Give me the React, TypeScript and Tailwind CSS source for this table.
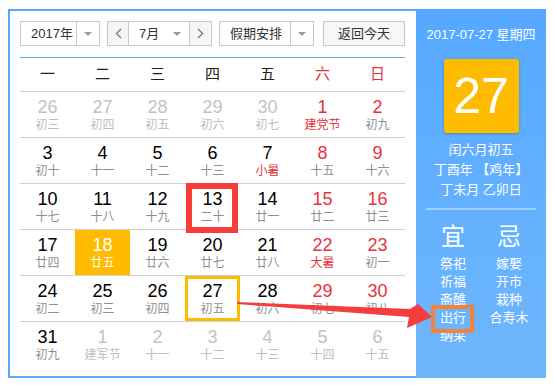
import React from "react";

type Cell = [number, string];

const weeks: Cell[][] = [
  [[26, "初三"], [27, "初四"], [28, "初五"], [29, "初六"], [30, "初七"], [1, "建党节"], [2, "初九"]],
  [[3, "初十"], [4, "十一"], [5, "十二"], [6, "十三"], [7, "小暑"], [8, "十五"], [9, "十六"]],
  [[10, "十七"], [11, "十八"], [12, "十九"], [13, "二十"], [14, "廿一"], [15, "廿二"], [16, "廿三"]],
  [[17, "廿四"], [18, "廿五"], [19, "廿六"], [20, "廿七"], [21, "廿八"], [22, "大暑"], [23, "初一"]],
  [[24, "初二"], [25, "初三"], [26, "初四"], [27, "初五"], [28, "初六"], [29, "初七"], [30, "初八"]],
  [[31, "初九"], [1, "建军节"], [2, "十一"], [3, "十二"], [4, "十三"], [5, "十四"], [6, "十五"]],
];

const redTerms = ["建党节", "小暑", "大暑"];

function Caret() {
  return <span className="block h-0 w-0 border-x-[4px] border-t-[4px] border-x-transparent border-t-[#9a9a9a]" />;
}

function DayCell({ cell, row, col }: { cell: Cell; row: number; col: number }) {
  const [n, lunar] = cell;
  const other = (row === 0 && n > 20) || (row === 5 && n < 10);
  const selected = row === 3 && col === 1;
  const today = row === 4 && col === 3;
  const weekend = col >= 5;

  let numColor = "text-black";
  let lunarColor = "text-[#8f8f8f]";
  if (other) {
    numColor = "text-[#c2c2c2]";
    lunarColor = "text-[#bdbdbd]";
  } else if (selected) {
    numColor = "text-white";
    lunarColor = "text-white";
  } else {
    if (weekend) numColor = "text-[#e8323a]";
    if (redTerms.includes(lunar)) lunarColor = "text-[#e8323a]";
  }

  return (
    <div
      className={
        "flex flex-col items-center " +
        (selected ? "bg-[#ffbb00] pt-[5px] " : "") +
        (today ? "border-[3px] border-[#ffbb00] pt-[2px]" : "") +
        (!selected && !today ? "pt-[5px]" : "")
      }
    >
      <span className={"text-[18px] leading-[20px] " + numColor}>{n}</span>
      <span className={"text-[12px] leading-[16px] " + lunarColor}>{lunar}</span>
    </div>
  );
}

export default function App() {
  const yi = ["祭祀", "祈福", "斋醮", "出行", "纳采"];
  const ji = ["嫁娶", "开市", "栽种", "合寿木"];

  return (
    <div className="relative h-[387px] w-[554px] bg-white pl-[8px] pt-[9px] font-['Liberation_Sans','Noto_Sans_CJK_SC',sans-serif]">
      <div className="flex h-[369px] w-[538px]">
        {/* Calendar */}
        <div className="w-[408px] border-2 border-r-0 border-[#57a9ff] bg-white pl-[10px] pr-[11px] pt-[10px]">
          <div className="flex h-[25px] text-[13px] text-[#333]">
            <div className="flex w-[80px] border border-[#c8c8c8]">
              <div className="flex w-[55px] items-center pl-[10px]">2017年</div>
              <div className="flex flex-1 items-center justify-center border-l border-[#c8c8c8]">
                <Caret />
              </div>
            </div>
            <div className="ml-[7px] flex w-[105px] border border-[#c8c8c8]">
              <div className="flex w-[21px] items-center justify-center border-r border-[#c8c8c8] bg-[#f5f5f5]">
                <svg width="7" height="11" viewBox="0 0 7 11">
                  <polyline points="6,1 1.5,5.5 6,10" fill="none" stroke="#777" strokeWidth="1.3" />
                </svg>
              </div>
              <div className="flex flex-1 items-center justify-between pl-[10px] pr-[8px]">
                <span>7月</span>
                <Caret />
              </div>
              <div className="flex w-[22px] items-center justify-center border-l border-[#c8c8c8] bg-[#f5f5f5]">
                <svg width="7" height="11" viewBox="0 0 7 11">
                  <polyline points="1,1 5.5,5.5 1,10" fill="none" stroke="#777" strokeWidth="1.3" />
                </svg>
              </div>
            </div>
            <div className="ml-[7px] flex w-[95px] border border-[#c8c8c8]">
              <div className="flex w-[70px] items-center pl-[10px]">假期安排</div>
              <div className="flex flex-1 items-center justify-center border-l border-[#c8c8c8]">
                <Caret />
              </div>
            </div>
            <button className="ml-[9px] w-[82px] border border-[#c8c8c8] bg-[#f7f7f7] text-[13px] text-[#333]">
              返回今天
            </button>
          </div>

          <div className="mt-[11px] h-px bg-[#57a9ff]" />

          <div className="grid h-[34px] grid-cols-7 items-center border-b border-[#cfcfcf] text-center text-[15px] text-[#222]">
            {["一", "二", "三", "四", "五"].map((d) => (
              <span key={d}>{d}</span>
            ))}
            <span className="text-[#e8323a]">六</span>
            <span className="text-[#e8323a]">日</span>
          </div>

          {weeks.map((week, r) => (
            <div
              key={r}
              className={"grid h-[46px] grid-cols-7 " + (r < weeks.length - 1 ? "border-b border-[#cfcfcf]" : "")}
            >
              {week.map((cell, c) => (
                <DayCell key={c} cell={cell} row={r} col={c} />
              ))}
            </div>
          ))}
        </div>

        {/* Day detail */}
        <div className="flex w-[130px] flex-col items-center bg-linear-to-b from-[#55a8ff] to-[#6fb7fd] pt-[16px] text-white">
          <div className="text-[13px] leading-[20px]">2017-07-27 星期四</div>
          <div className="mt-[14px] flex h-[74px] w-[75px] items-center justify-center rounded-[3px] bg-[#ffbb00] text-[50px] leading-none shadow-[0_1px_3px_rgba(0,0,0,0.25)]">
            27
          </div>
          <div className="mt-[7px] text-center text-[13px] leading-[20px]">
            <div>闰六月初五</div>
            <div>丁酉年 【鸡年】</div>
            <div>丁未月 乙卯日</div>
          </div>
          <div className="mt-[8px] h-[2px] w-[110px] bg-white/40" />
          <div className="mt-[12px] grid w-[112px] grid-cols-2 text-center text-[24px] leading-[30px]">
            <span>宜</span>
            <span>忌</span>
          </div>
          <div className="mt-[3px] grid w-[112px] grid-cols-2 text-center text-[13px] leading-[18px]">
            <div>
              {yi.map((t) => (
                <div key={t}>{t}</div>
              ))}
            </div>
            <div>
              {ji.map((t) => (
                <div key={t}>{t}</div>
              ))}
            </div>
          </div>
        </div>
      </div>

      {/* Annotations */}
      <div className="absolute left-[186px] top-[183px] h-[50px] w-[52px] border-[6px] border-[#f83b3b]" />
      <div className="absolute left-[431px] top-[305px] h-[28px] w-[43px] border-[4px] border-[#f5823c]" />
      <svg className="pointer-events-none absolute left-0 top-0" width="554" height="387">
        <polygon
          points="237,302 410,309 418,304 432,317 407,328 409,317 237,304"
          fill="#f43d3d"
        />
      </svg>
    </div>
  );
}
